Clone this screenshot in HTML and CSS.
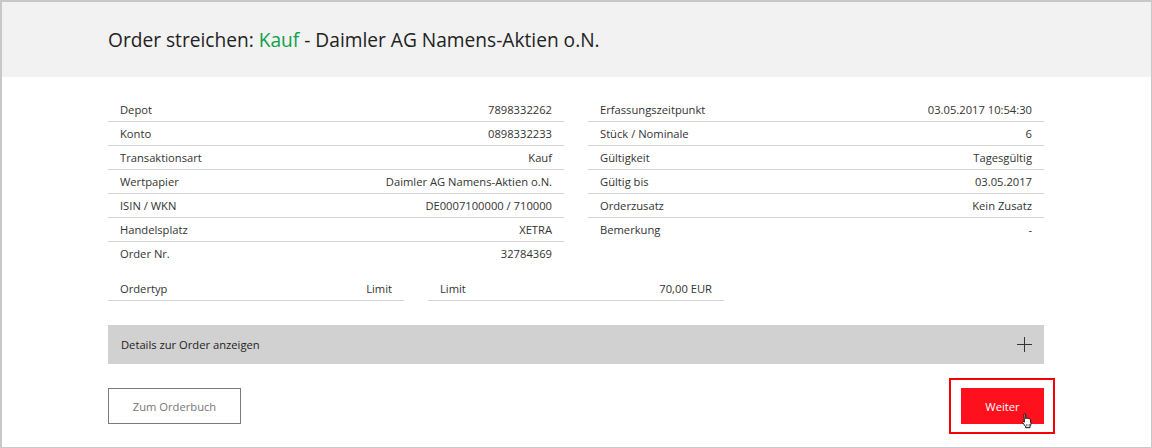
FILE: index.html
```html
<!DOCTYPE html>
<html lang="de">
<head>
<meta charset="utf-8">
<title>Order streichen</title>
<link rel="stylesheet" href="styles.css">
</head>
<body>
<div class="frame">
  <header class="head">
    <h1 class="title">Order streichen: <span class="buy">Kauf</span> - Daimler AG Namens-Aktien o.N.</h1>
  </header>
  <main class="content">
    <div class="cols">
      <div class="col">
        <div class="row"><span>Depot</span><span>7898332262</span></div>
        <div class="row"><span>Konto</span><span>0898332233</span></div>
        <div class="row"><span>Transaktionsart</span><span>Kauf</span></div>
        <div class="row"><span>Wertpapier</span><span>Daimler AG Namens-Aktien o.N.</span></div>
        <div class="row"><span>ISIN / WKN</span><span>DE0007100000 / 710000</span></div>
        <div class="row"><span>Handelsplatz</span><span>XETRA</span></div>
        <div class="row row-plain"><span>Order Nr.</span><span>32784369</span></div>
      </div>
      <div class="col">
        <div class="row"><span>Erfassungszeitpunkt</span><span>03.05.2017 10:54:30</span></div>
        <div class="row"><span>Stück / Nominale</span><span>6</span></div>
        <div class="row"><span>Gültigkeit</span><span>Tagesgültig</span></div>
        <div class="row"><span>Gültig bis</span><span>03.05.2017</span></div>
        <div class="row"><span>Orderzusatz</span><span>Kein Zusatz</span></div>
        <div class="row row-plain"><span>Bemerkung</span><span>-</span></div>
      </div>
    </div>
    <div class="limits">
      <div class="row limit"><span>Ordertyp</span><span>Limit</span></div>
      <div class="row limit"><span>Limit</span><span>70,00 EUR</span></div>
    </div>
    <div class="details">
      <span>Details zur Order anzeigen</span>
      <svg class="plus" width="15" height="15" viewBox="0 0 15 15" aria-hidden="true"><path d="M7.500 0V15M0 7.500H15" stroke="#333" stroke-width="1" fill="none"/></svg>
    </div>
    <div class="actions">
      <button class="btn btn-ghost" type="button">Zum Orderbuch</button>
      <div class="next">
        <button class="btn btn-red" type="button">Weiter</button>
        <div class="mark"></div>
        <svg class="hand" width="12" height="16" viewBox="0 0 12 16" aria-hidden="true"><path d="M3 1.200c.6-.6 1.500-.3 1.600.5l.2 4 .4-.6c.6-.3 1.200-.1 1.400.4.500-.4 1.200-.2 1.400.4.600-.3 1.300 0 1.400.6l.6 4c0 1.300-.4 2.200-1 3.200v1H4.600v-1L1.700 9.600c-.4-.8.400-1.500 1.100-1l.6.600L3 2z" fill="#fff" stroke="#111" stroke-width="1" stroke-linejoin="round"/><path d="M5.500 11v2.500M7 11v2.500M8.500 11v2.500" stroke="#555" stroke-width=".7"/></svg>
      </div>
    </div>
  </main>
</div>
</body>
</html>
```
FILE: styles.css
```css
* { box-sizing: border-box; }
html, body { margin: 0; padding: 0; background: #fff; }
body {
  width: 1152px;
  height: 448px;
  overflow: hidden;
  font-family: "Open Sans", "Liberation Sans", sans-serif;
  font-size: 11.2px;
  color: #333;
}
.frame {
  width: 1152px;
  height: 448px;
  border: 2px solid #c8c8c8;
  border-right-width: 1px;
  border-bottom-width: 1px;
}
.head {
  height: 75px;
  background: #f2f2f2;
  padding: 0 106px;
  display: flex;
  align-items: center;
}
.title {
  margin: 0;
  font-size: 19.15px;
  font-weight: 400;
  line-height: 26px;
  color: #222;
}
.buy { color: #0fa04b; }
.content {
  width: 936px;
  margin-left: 106px;
  padding-top: 21px;
}
.cols {
  display: grid;
  grid-template-columns: 456px 456px;
  column-gap: 24px;
}
.row {
  height: 24px;
  padding: 0 12px;
  display: flex;
  align-items: center;
  justify-content: space-between;
  border-bottom: 1px solid #d4d4d4;
}
.row-plain { border-bottom-color: transparent; }
.limits {
  display: flex;
  gap: 24px;
  margin-top: 11px;
}
.limit { width: 296px; }
.details {
  height: 39px;
  margin-top: 24px;
  padding: 0 12px 0 13px;
  background: #d1d1d1;
  color: #222;
  display: flex;
  align-items: center;
  justify-content: space-between;
}
.actions {
  margin-top: 24px;
  display: flex;
  justify-content: space-between;
}
.btn {
  height: 36px;
  font: inherit;
  padding: 0;
  cursor: pointer;
}
.btn-ghost {
  width: 133px;
  background: #fff;
  border: 1px solid #7a7a7a;
  color: #777;
}
.next { position: relative; }
.btn-red {
  display: block;
  width: 83px;
  background: #ff101c;
  border: 0;
  color: #fff;
}
.mark {
  position: absolute;
  left: -12px;
  top: -10px;
  width: 106px;
  height: 56px;
  border: 2px solid #f80008;
}
.hand {
  position: absolute;
  left: 60px;
  top: 25px;
}
```
